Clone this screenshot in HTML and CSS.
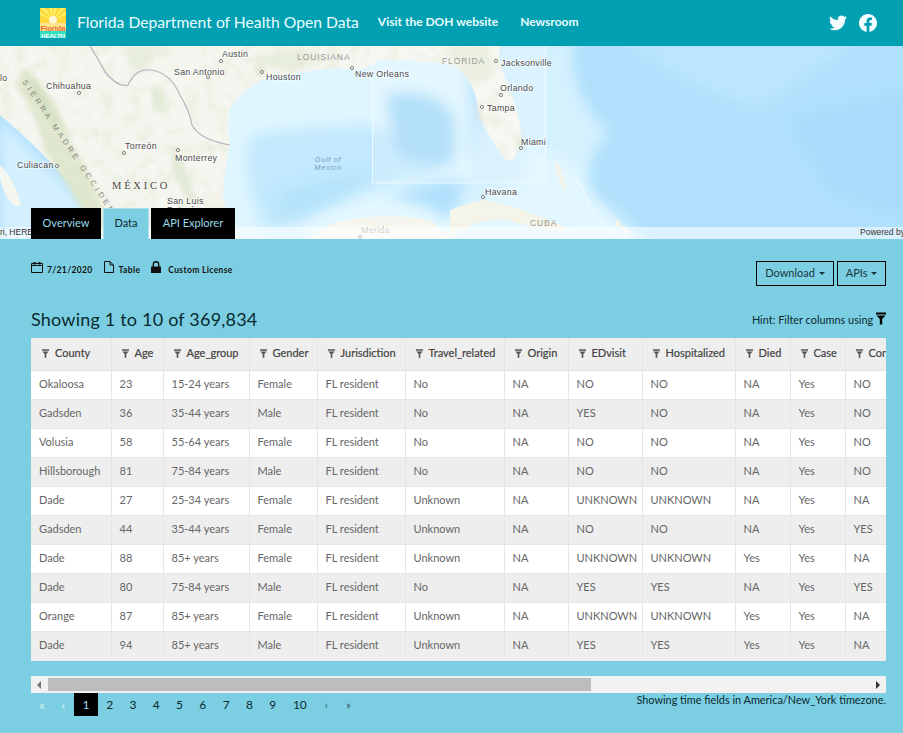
FILE: index.html
```html
<!DOCTYPE html>
<html lang="en">
<head>
<meta charset="UTF-8">
<meta name="viewport" content="width=device-width, initial-scale=1.0">
<title>Florida Department of Health Open Data</title>
<link rel="stylesheet" href="styles.css">
</head>
<body>

<svg class="defs" width="0" height="0" aria-hidden="true">
    <symbol id="funnel" viewBox="0 0 10 12">
        <path d="M0 0h10v2H0zM.5 3h9L6.2 6.6V12H3.8V6.6z"/>
    </symbol>
</svg>

<header class="topbar">
    <a class="brand" href="#">
        <svg class="brand-logo" viewBox="0 0 26 30" aria-hidden="true">
            <rect width="26" height="30" fill="#ffd83a"/>
            <path d="M13 12 1 0h4zM13 12 9 0h3zM13 12 14 0h3zM13 12 21 0h4zM13 12 0 4v3zM13 12 26 4v3z" fill="#fff06a"/>
            <circle cx="13" cy="12" r="4" fill="#fff8d8"/>
            <rect y="15" width="26" height="8" fill="#ffe68a"/>
            <rect y="23" width="26" height="7" fill="#35e0c0"/>
            <text class="logo-florida" x="13" y="22.500">Florida</text>
            <text class="logo-health" x="13" y="29.500">HEALTH</text>
        </svg>
        <span class="brand-name">Florida Department of Health Open Data</span>
    </a>
    <nav class="topnav">
        <a href="#">Visit the DOH website</a>
        <a href="#">Newsroom</a>
    </nav>
    <div class="social">
        <a href="#" aria-label="Twitter">
            <svg class="icon-twitter" viewBox="0 0 24 24"><path d="M23.953 4.57a10 10 0 01-2.825.775 4.958 4.958 0 002.163-2.723c-.951.555-2.005.959-3.127 1.184a4.92 4.92 0 00-8.384 4.482C7.69 8.095 4.067 6.13 1.64 3.162a4.822 4.822 0 00-.666 2.475c0 1.71.87 3.213 2.188 4.096a4.904 4.904 0 01-2.228-.616v.06a4.923 4.923 0 003.946 4.827 4.996 4.996 0 01-2.212.085 4.936 4.936 0 004.604 3.417 9.867 9.867 0 01-6.102 2.105c-.39 0-.779-.023-1.17-.067a13.995 13.995 0 007.557 2.209c9.053 0 13.998-7.496 13.998-13.985 0-.21 0-.42-.015-.63A9.935 9.935 0 0024 4.59z"/></svg>
        </a>
        <a href="#" aria-label="Facebook">
            <svg class="icon-facebook" viewBox="0 0 24 24"><path d="M24 12.073c0-6.627-5.373-12-12-12s-12 5.373-12 12c0 5.99 4.388 10.954 10.125 11.854v-8.385H7.078v-3.47h3.047V9.43c0-3.007 1.792-4.669 4.533-4.669 1.312 0 2.686.235 2.686.235v2.953H15.83c-1.491 0-1.956.925-1.956 1.874v2.25h3.328l-.532 3.47h-2.796v8.385C19.612 23.027 24 18.062 24 12.073z"/></svg>
        </a>
    </div>
</header>

<section class="hero">
    <svg class="map" viewBox="0 46 903 193" aria-hidden="true">
        <defs>
            <filter id="soft" x="-10%" y="-10%" width="120%" height="120%"><feGaussianBlur stdDeviation="7"/></filter>
            <filter id="softer" x="-10%" y="-10%" width="120%" height="120%"><feGaussianBlur stdDeviation="2.500"/></filter>
            <filter id="grain" x="0" y="0" width="100%" height="100%">
                <feTurbulence type="fractalNoise" baseFrequency=".07" numOctaves="3" seed="4"/>
                <feColorMatrix values="0 0 0 0 .78  0 0 0 0 .84  0 0 0 0 .68  0 0 1.800 0 -.8"/>
                <feComposite in2="SourceAlpha" operator="in"/>
            </filter>
        </defs>
        <rect x="0" y="46" width="903" height="193" fill="#b0e0fc"/>

        <!-- ocean depth, blurred so the bands fade into each other -->
        <g filter="url(#soft)">
            <path d="M620 40 Q690 90 760 110 L860 40z" fill="#bbe6fd"/>
            <path d="M790 120 L910 90 V220 L830 190z" fill="#a9dcfb"/>
            <path d="M200 40 H470 V180 H440 Q400 190 340 215 Q300 235 270 245 H200z" fill="#dff6ff"/>
            <path d="M250 135 Q310 125 375 125 Q420 150 440 172 Q400 178 340 205 Q300 222 265 232 Q240 180 250 135z" fill="#c2e9fd"/>
            <path d="M385 95 Q430 85 452 112 Q460 140 452 165 Q420 170 395 150z" fill="#a6daf9"/>
            <path d="M280 190 Q320 178 380 170 Q350 195 300 220 L275 222z" fill="#b5e3fb"/>
            <path d="M495 40 H575 Q565 90 610 135 Q580 150 590 245 H440 L470 170z" fill="#d5f1fe"/>
            <path d="M525 150 Q575 150 590 190 Q615 215 650 245 H420 Q470 200 525 180z" fill="#e2f7ff"/>
            <path d="M0 118 L125 245 H0z" fill="#d4f0fe"/>
            <path d="M295 245 Q320 200 380 198 Q440 198 470 245z" fill="#e4f8ff"/>
        </g>

        <!-- land -->
        <path d="M0 46 H500 Q497 60 506 80 Q520 115 521 135 Q520 150 513 160 Q505 163 497 148 Q485 130 478 112 Q478 92 465 74 Q455 63 440 63 Q410 60 378 60 Q370 68 356 70 Q330 66 300 73 Q270 75 258 82 Q240 92 230 108 Q226 125 230 145 Q224 170 223 195 Q226 220 240 239 H122 Q90 205 60 172 Q30 140 0 115z" fill="#f6f6f1"/>
        <path d="M0 165 Q15 180 21 205 Q15 210 8 198 Q0 185 0 175z" fill="#f6f6f1"/>
        <path d="M310 239 Q325 220 370 217 Q410 214 432 222 Q445 230 450 239z" fill="#f6f6ee"/>
        <path d="M450 210 Q470 202 484 200 Q510 205 530 213 Q555 222 572 230 Q550 232 520 224 Q500 216 480 222 Q460 228 450 239z" fill="#f4f5e8"/>
        <path d="M555 160 L562 170 L565 185 L557 175zM558 178 L566 183 L564 192zM615 218 L622 225 L616 228zM620 225 L630 230 L625 235z" fill="#f5f4e9"/>
        <path d="M560 175 Q580 175 585 195 Q592 215 612 232" fill="none" stroke="#eaf9ff" stroke-width="2"/>

        <!-- relief -->
        <g filter="url(#softer)">
            <path d="M25 68 Q60 100 70 140 Q90 170 115 239 H100 Q70 190 45 150 Q35 110 15 85z" fill="#dfe6cd"/>
            <path d="M25 68 Q50 100 60 125 Q50 125 35 100z" fill="#d3dfbf"/>
            <path d="M150 85 l14 5 l2 25 l-12 -8zM172 150 l12 12 l14 45 l-12 -8 l-14 -30z" fill="#e2e9d5"/>
            <path d="M120 46 l40 0 l-20 30z M240 60 l60 -14 l30 14 l-40 12z M440 46 l50 0 l5 30 l-20 10z" fill="#e9eedd"/>
            <circle cx="260" cy="71" r="5" fill="#e2dfcf"/>
            <path d="M478 100 l6 22 l-6 -4zM520 128 l3 20 l-5 2z" fill="#dcdccf"/>
        </g>
        <path filter="url(#grain)" d="M0 46 H500 Q497 60 506 80 Q520 115 521 135 Q520 150 513 160 Q505 163 497 148 Q485 130 478 112 Q478 92 465 74 Q455 63 440 63 Q410 60 378 60 Q370 68 356 70 Q330 66 300 73 Q270 75 258 82 Q240 92 230 108 Q226 125 230 145 Q224 170 223 195 Q226 220 240 239 H122 Q90 205 60 172 Q30 140 0 115z"/>
        <path d="M90 46 Q100 62 105 72 Q118 88 128 85 Q136 68 150 70 Q170 72 180 95 Q190 112 192 125 Q200 140 230 145" fill="none" stroke="#bcb0c0" stroke-width="1.200"/>

        <!-- landsat box -->
        <rect x="372.500" y="40" width="173" height="143" fill="#fff" fill-opacity=".16" stroke="#f1fbff" stroke-opacity=".85"/>

        <g class="dots">
            <circle cx="221" cy="61" r="1.600"/><circle cx="208" cy="77" r="1.600"/><circle cx="79" cy="93" r="1.600"/>
            <circle cx="262" cy="72" r="1.600"/><circle cx="352" cy="68" r="1.600"/><circle cx="496" cy="61" r="1.600"/>
            <circle cx="501" cy="95" r="1.600"/><circle cx="482" cy="107" r="1.600"/><circle cx="521" cy="148" r="1.600"/>
            <circle cx="124" cy="153" r="1.600"/><circle cx="178" cy="150" r="1.600"/><circle cx="57" cy="166" r="1.600"/>
            <circle cx="360" cy="237" r="1.600"/><circle cx="483" cy="197" r="1.600"/>
        </g>
        <g class="city">
            <text x="222" y="57">Austin</text>
            <text x="174" y="75">San Antonio</text>
            <text x="46" y="89">Chihuahua</text>
            <text x="266" y="80">Houston</text>
            <text x="355" y="77">New Orleans</text>
            <text x="501" y="66">Jacksonville</text>
            <text x="500" y="91">Orlando</text>
            <text x="487" y="111">Tampa</text>
            <text x="521" y="145">Miami</text>
            <text x="125" y="149">Torreón</text>
            <text x="175" y="161">Monterrey</text>
            <text x="17" y="168">Culiacan</text>
            <text x="167" y="204">San Luis</text>
            <text x="167" y="213">Potosí</text>
            <text x="485" y="195">Havana</text>
            <text x="0" y="81">lo</text>
            <text class="faint" x="361" y="233">Merida</text>
        </g>
        <text class="region" x="297" y="60">LOUISIANA</text>
        <text class="region" x="442" y="64">FLORIDA</text>
        <text class="region" x="530" y="226">CUBA</text>
        <text class="country" x="112" y="189">MÉXICO</text>
        <text class="water" x="328" y="162">Gulf of</text>
        <text class="water" x="328" y="170">Mexico</text>
        <text class="range" transform="translate(22 82) rotate(56)">SIERRA MADRE OCCIDENTAL</text>

        <rect x="0" y="227" width="903" height="12" fill="#fff" fill-opacity=".55"/>
        <text class="credit" x="-10" y="235">Esri, HERE</text>
        <text class="credit" x="860" y="235">Powered by Esri</text>
    </svg>
    <div class="tabs">
        <a class="tab" href="#">Overview</a>
        <a class="tab tab-active" href="#">Data</a>
        <a class="tab" href="#">API Explorer</a>
    </div>
</section>

<main class="content">
    <div class="toolbar">
        <ul class="meta">
            <li>
                <svg class="meta-icon" viewBox="0 0 12 12"><path d="M.5 2.500h11v9H.5zM.5 4.500h11" fill="none" stroke="#111"/><path d="M2.500 1h2v2.500h-2zM7.500 1h2v2.500h-2z" fill="#111"/></svg>
                7/21/2020
            </li>
            <li>
                <svg class="meta-icon" viewBox="0 0 12 12"><path d="M1.500.5h5.500l3.500 3.500v7.500h-9zM7 .5v3.500h3.500" fill="none" stroke="#111"/></svg>
                Table
            </li>
            <li class="meta-license">
                <svg class="meta-icon" viewBox="0 0 12 12"><path d="M1 5.500h10V12H1z" fill="#111"/><path d="M3.300 6V3.500a2.700 2.700 0 0 1 5.400 0V6" fill="none" stroke="#111" stroke-width="1.400"/></svg>
                Custom License
            </li>
        </ul>
        <div class="actions">
            <button class="btn btn-download" type="button">Download <span class="caret"></span></button>
            <button class="btn btn-apis" type="button">APIs <span class="caret"></span></button>
        </div>
    </div>

    <div class="summary">
        <h2>Showing 1 to 10 of 369,834</h2>
        <p class="hint">Hint: Filter columns using <svg class="hint-icon"><use href="#funnel"/></svg></p>
    </div>

    <div class="table-wrap">
        <table class="data-table">
            <colgroup>
                <col class="c1"><col class="c2"><col class="c3"><col class="c4"><col class="c5"><col class="c6">
                <col class="c7"><col class="c8"><col class="c9"><col class="c10"><col class="c11"><col class="c12">
            </colgroup>
            <thead>
                <tr>
                    <th><svg class="funnel"><use href="#funnel"/></svg>County</th>
                    <th><svg class="funnel"><use href="#funnel"/></svg>Age</th>
                    <th><svg class="funnel"><use href="#funnel"/></svg>Age_group</th>
                    <th><svg class="funnel"><use href="#funnel"/></svg>Gender</th>
                    <th><svg class="funnel"><use href="#funnel"/></svg>Jurisdiction</th>
                    <th><svg class="funnel"><use href="#funnel"/></svg>Travel_related</th>
                    <th><svg class="funnel"><use href="#funnel"/></svg>Origin</th>
                    <th><svg class="funnel"><use href="#funnel"/></svg>EDvisit</th>
                    <th><svg class="funnel"><use href="#funnel"/></svg>Hospitalized</th>
                    <th><svg class="funnel"><use href="#funnel"/></svg>Died</th>
                    <th><svg class="funnel"><use href="#funnel"/></svg>Case</th>
                    <th><svg class="funnel"><use href="#funnel"/></svg>Contact</th>
                </tr>
            </thead>
            <tbody>
                <tr><td>Okaloosa</td><td>23</td><td>15-24 years</td><td>Female</td><td>FL resident</td><td>No</td><td>NA</td><td>NO</td><td>NO</td><td>NA</td><td>Yes</td><td>NO</td></tr>
                <tr><td>Gadsden</td><td>36</td><td>35-44 years</td><td>Male</td><td>FL resident</td><td>No</td><td>NA</td><td>YES</td><td>NO</td><td>NA</td><td>Yes</td><td>NO</td></tr>
                <tr><td>Volusia</td><td>58</td><td>55-64 years</td><td>Female</td><td>FL resident</td><td>No</td><td>NA</td><td>NO</td><td>NO</td><td>NA</td><td>Yes</td><td>NO</td></tr>
                <tr><td>Hillsborough</td><td>81</td><td>75-84 years</td><td>Male</td><td>FL resident</td><td>No</td><td>NA</td><td>NO</td><td>NO</td><td>NA</td><td>Yes</td><td>NO</td></tr>
                <tr><td>Dade</td><td>27</td><td>25-34 years</td><td>Female</td><td>FL resident</td><td>Unknown</td><td>NA</td><td>UNKNOWN</td><td>UNKNOWN</td><td>NA</td><td>Yes</td><td>NA</td></tr>
                <tr><td>Gadsden</td><td>44</td><td>35-44 years</td><td>Female</td><td>FL resident</td><td>Unknown</td><td>NA</td><td>NO</td><td>NO</td><td>NA</td><td>Yes</td><td>YES</td></tr>
                <tr><td>Dade</td><td>88</td><td>85+ years</td><td>Female</td><td>FL resident</td><td>Unknown</td><td>NA</td><td>UNKNOWN</td><td>UNKNOWN</td><td>Yes</td><td>Yes</td><td>NA</td></tr>
                <tr><td>Dade</td><td>80</td><td>75-84 years</td><td>Male</td><td>FL resident</td><td>No</td><td>NA</td><td>YES</td><td>YES</td><td>NA</td><td>Yes</td><td>YES</td></tr>
                <tr><td>Orange</td><td>87</td><td>85+ years</td><td>Female</td><td>FL resident</td><td>Unknown</td><td>NA</td><td>UNKNOWN</td><td>UNKNOWN</td><td>Yes</td><td>Yes</td><td>NA</td></tr>
                <tr><td>Dade</td><td>94</td><td>85+ years</td><td>Male</td><td>FL resident</td><td>Unknown</td><td>NA</td><td>YES</td><td>YES</td><td>Yes</td><td>Yes</td><td>NA</td></tr>
            </tbody>
        </table>
    </div>

    <div class="scrollbar">
        <span class="arrow arrow-left"></span>
        <span class="thumb"></span>
        <span class="arrow arrow-right"></span>
    </div>

    <div class="table-foot">
        <ul class="pager">
            <li class="muted wide">«</li>
            <li class="muted">‹</li>
            <li class="current">1</li>
            <li>2</li>
            <li>3</li>
            <li>4</li>
            <li>5</li>
            <li>6</li>
            <li>7</li>
            <li>8</li>
            <li>9</li>
            <li class="wide">10</li>
            <li class="end">›</li>
            <li class="end">»</li>
        </ul>
        <p class="timezone">Showing time fields in America/New_York timezone.</p>
    </div>
</main>

</body>
</html>
```

FILE: styles.css
```css
* {
    box-sizing: border-box;
}

body {
    margin: 0;
    height: 733px;
    overflow: hidden;
    background-color: #7ccfe2;
    color: #0b2a30;
    font-family: Lato, "Open Sans", sans-serif;
}

a {
    color: inherit;
    text-decoration: none;
}

ul {
    margin: 0;
    padding: 0;
    list-style: none;
}

.defs {
    position: absolute;
}

/* top bar */
.topbar {
    display: flex;
    align-items: center;
    height: 46px;
    padding: 0 26px 0 40px;
    background-color: #00a0b2;
    color: #eafcfd;
}

.brand {
    display: flex;
    align-items: center;
    gap: 11px;
}

.brand-logo {
    width: 26px;
    height: 30px;
}

.logo-florida {
    fill: #e8683a;
    font: 700 7.500px "Liberation Sans", sans-serif;
    text-anchor: middle;
}

.logo-health {
    fill: #fff;
    font: 700 6px "Liberation Sans", sans-serif;
    text-anchor: middle;
}

.brand-name {
    font-size: 15.700px;
    line-height: 20px;
    margin-top: -2px;
}

.topnav {
    display: flex;
    gap: 22px;
    margin-left: 19px;
    margin-top: -3px;
    font-size: 12px;
    font-weight: 700;
}

.social {
    display: flex;
    align-items: center;
    gap: 12px;
    margin-left: auto;
}

.social a {
    display: flex;
}

.social svg {
    fill: #f4fdfe;
}

.icon-twitter {
    width: 18px;
    height: 18px;
}

.icon-facebook {
    width: 18px;
    height: 18px;
}

/* map */
.hero {
    position: relative;
    display: flex;
    align-items: flex-end;
    height: 193px;
    padding-left: 31px;
    overflow: hidden;
}

.map {
    position: absolute;
    top: 0;
    left: 0;
    width: 903px;
    height: 193px;
}

.map text {
    font-family: "Liberation Sans", sans-serif;
}

.dots circle {
    fill: #f5f5f0;
    stroke: #666;
    stroke-width: .8;
}

.city text {
    fill: #4a4a4a;
    font-size: 8.800px;
    letter-spacing: .3px;
    stroke: #fff;
    stroke-width: 2px;
    stroke-opacity: .5;
    paint-order: stroke;
}

.city .faint {
    fill: #999;
}

.map .region {
    fill: #999;
    font-size: 8.500px;
    letter-spacing: .9px;
}

.map .country {
    fill: #4a4a4a;
    font-family: "Liberation Serif", serif;
    font-size: 10.500px;
    letter-spacing: 2.800px;
}

.map .water {
    fill: #7d9fb8;
    font-size: 7.500px;
    font-style: italic;
    letter-spacing: .6px;
    text-anchor: middle;
}

.map .range {
    fill: #85857a;
    font-size: 7.500px;
    letter-spacing: 3.400px;
}

.map .credit {
    fill: #333;
    font-size: 8.500px;
}

.tabs {
    position: relative;
    display: flex;
    gap: 2px;
}

.tab {
    display: flex;
    justify-content: center;
    align-items: center;
    width: 70px;
    height: 31px;
    padding-bottom: 3px;
    background-color: #000;
    color: #9adbe8;
    font-size: 11px;
}

.tab:last-child {
    width: 84px;
}

.tab-active {
    width: 46px;
    background-color: #7ccfe2;
    border: 1px solid #a9dfea;
    border-bottom: 0;
    color: #0b2a30;
}

/* data section */
.content {
    padding: 22px 17px 0 31px;
}

.toolbar {
    display: flex;
    justify-content: space-between;
    align-items: flex-start;
}

.meta {
    display: flex;
    gap: 10px;
    color: #111;
    font-size: 8.500px;
    font-weight: 700;
    letter-spacing: .35px;
}

.meta li {
    display: flex;
    align-items: flex-end;
    gap: 4px;
    height: 14px;
    line-height: 10px;
}

.meta li.meta-license {
    gap: 6px;
}

.meta-icon {
    width: 12px;
    height: 12px;
    margin-bottom: 2px;
}

.actions {
    display: flex;
    gap: 3px;
}

.btn {
    height: 25px;
    padding: 0 0 3px;
    background: transparent;
    border: 1px solid #000;
    color: #17363c;
    font-family: inherit;
    font-size: 11px;
}

.btn-download {
    width: 78px;
}

.btn-apis {
    width: 49px;
}

.caret {
    display: inline-block;
    margin-left: 1px;
    border-top: 3px solid #17363c;
    border-left: 3px solid transparent;
    border-right: 3px solid transparent;
    vertical-align: 2px;
}

.summary {
    display: flex;
    justify-content: space-between;
    align-items: flex-end;
    margin-top: 21px;
    margin-bottom: 7px;
}

.summary h2 {
    margin: 0;
    font-size: 18px;
    font-weight: 400;
    letter-spacing: .2px;
    line-height: 24px;
}

.hint {
    margin: 0 0 5px;
    font-size: 10.900px;
}

.hint-icon {
    width: 10px;
    height: 13px;
    vertical-align: -1px;
}

.table-wrap {
    width: 855px;
    padding-bottom: 1px;
    overflow: hidden;
    background-color: #eee;
}

.data-table {
    width: 895px;
    table-layout: fixed;
    border-collapse: collapse;
    background-color: #fff;
    font-size: 11px;
    color: #666;
}

.c1 { width: 80px; }
.c2 { width: 52px; }
.c3 { width: 86px; }
.c4 { width: 68px; }
.c5 { width: 88px; }
.c6 { width: 99px; }
.c7 { width: 64px; }
.c8 { width: 74px; }
.c9 { width: 93px; }
.c10 { width: 55px; }
.c11 { width: 55px; }
.c12 { width: 81px; }

.data-table th,
.data-table td {
    border-left: 1px solid #e6e6e6;
    white-space: nowrap;
    overflow: hidden;
    text-align: left;
}

.data-table th:first-child,
.data-table td:first-child {
    border-left: 0;
}

.data-table th {
    height: 32px;
    padding: 0 0 2px 10px;
    background-color: #eee;
    border-bottom: 1px solid #e0e0e0;
    color: #444;
    font-weight: 400;
    font-size: 11px;
    -webkit-text-stroke: .2px #444;
}

.data-table th:first-child {
    padding-left: 11px;
}

.data-table td {
    height: 29px;
    padding: 0 0 2px 8px;
    border-top: 1px solid #e6e6e6;
}

.data-table tbody tr:nth-child(even) {
    background-color: #eee;
}

.funnel {
    width: 7px;
    height: 9px;
    margin-right: 6px;
    fill: #555;
    vertical-align: -1px;
}

/* scrollbar */
.scrollbar {
    display: flex;
    align-items: center;
    width: 855px;
    height: 17px;
    margin-top: 15px;
    background-color: #f1f1f1;
}

.arrow {
    width: 0;
    height: 0;
    border-top: 4px solid transparent;
    border-bottom: 4px solid transparent;
}

.arrow-left {
    margin: 0 7px 0 6px;
    border-right: 4px solid #777;
}

.thumb {
    width: 543px;
    height: 13px;
    background-color: #bdbdbd;
}

.arrow-right {
    margin-left: auto;
    margin-right: 6px;
    border-left: 4px solid #333;
}

/* pagination */
.table-foot {
    display: flex;
    justify-content: space-between;
    align-items: flex-start;
}

.pager {
    display: flex;
    align-items: center;
    height: 23px;
    font-size: 12px;
}

.pager li {
    display: flex;
    justify-content: center;
    align-items: center;
    width: 23.300px;
    height: 23px;
}

.pager .muted {
    width: 21px;
    color: #c3eaf2;
    font-size: 13px;
    font-weight: 700;
}

.pager .muted.wide {
    width: 22px;
}

.pager .wide {
    width: 31px;
}

.pager .end {
    width: 22px;
    font-size: 11px;
    color: #2a5a66;
}

.pager .current {
    width: 24px;
    background-color: #000;
    color: #9adbe8;
}

.timezone {
    margin: 0;
    font-size: 10.900px;
    line-height: 14px;
}
```
